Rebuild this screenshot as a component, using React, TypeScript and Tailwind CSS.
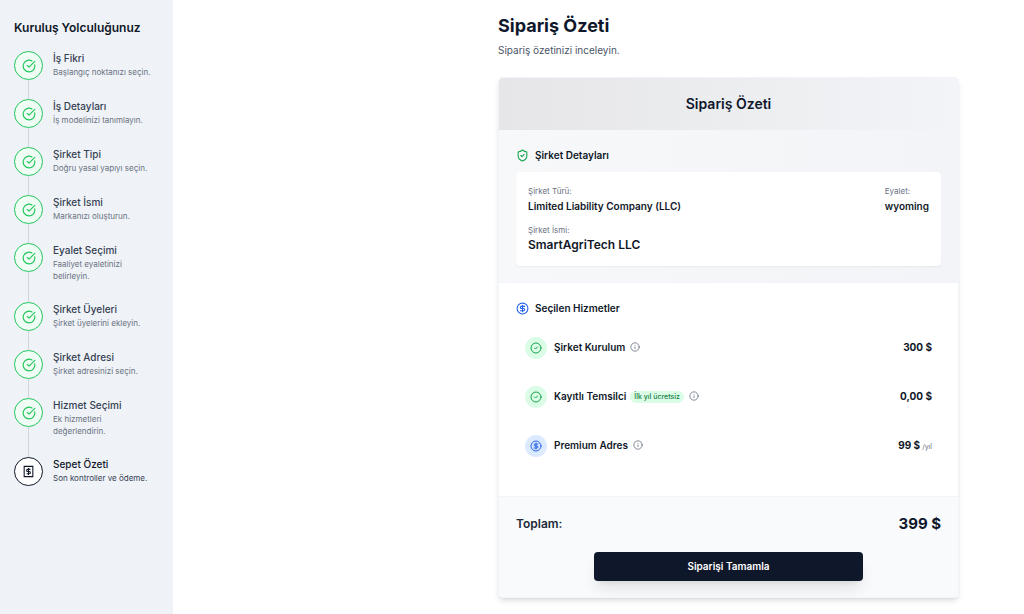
import type { ReactNode } from 'react';
import { CircleCheck, CircleCheckBig, CircleDollarSign, Info, ShieldCheck } from 'lucide-react';

interface Step {
  title: string;
  description: string;
}

interface Service {
  name: string;
  price: string;
  period?: string;
  badge?: string;
  paid?: boolean;
}

const steps: Step[] = [
  { title: 'İş Fikri', description: 'Başlangıç noktanızı seçin.' },
  { title: 'İş Detayları', description: 'İş modelinizi tanımlayın.' },
  { title: 'Şirket Tipi', description: 'Doğru yasal yapıyı seçin.' },
  { title: 'Şirket İsmi', description: 'Markanızı oluşturun.' },
  { title: 'Eyalet Seçimi', description: 'Faaliyet eyaletinizi belirleyin.' },
  { title: 'Şirket Üyeleri', description: 'Şirket üyelerini ekleyin.' },
  { title: 'Şirket Adresi', description: 'Şirket adresinizi seçin.' },
  { title: 'Hizmet Seçimi', description: 'Ek hizmetleri değerlendirin.' },
  { title: 'Sepet Özeti', description: 'Son kontroller ve ödeme.' },
];

const services: Service[] = [
  { name: 'Şirket Kurulum', price: '300 $' },
  { name: 'Kayıtlı Temsilci', price: '0,00 $', badge: 'İlk yıl ücretsiz' },
  { name: 'Premium Adres', price: '99 $', period: '/yıl', paid: true },
];

function ReceiptIcon() {
  return (
    <svg width="13" height="13" viewBox="0 0 24 24" fill="none" stroke="currentColor" strokeWidth="2">
      <path d="M4 2.5h16v19H4z" />
      <path d="M15.5 8h-5a2 2 0 0 0 0 4h3a2 2 0 0 1 0 4h-5" />
      <path d="M12 5.5v13" />
    </svg>
  );
}

function StepItem({ step, current }: { step: Step; current: boolean }) {
  return (
    <li className="flex min-h-12 gap-[10px]">
      <div className="flex flex-col items-center">
        {current ? (
          <div className="flex size-[29px] shrink-0 items-center justify-center rounded-full border border-gray-900 bg-white text-gray-900">
            <ReceiptIcon />
          </div>
        ) : (
          <>
            <div className="flex size-[29px] shrink-0 items-center justify-center rounded-full border border-[#22c55e] bg-green-50 text-[#22c55e]">
              <CircleCheckBig size={14} />
            </div>
            <div className="w-px flex-1 bg-gray-300" />
          </>
        )}
      </div>
      <div className="flex-1 pb-5">
        <h3 className={`text-[10px] leading-[14px] font-medium ${current ? 'text-gray-900' : 'text-gray-700'}`}>
          {step.title}
        </h3>
        <p className={`mt-px max-w-[102px] text-[8px] leading-3 ${current ? 'text-gray-700' : 'text-gray-500'}`}>
          {step.description}
        </p>
      </div>
    </li>
  );
}

function Field({ label, children }: { label: string; children: ReactNode }) {
  return (
    <div>
      <dt className="text-[8px] leading-[14px] text-gray-500">{label}</dt>
      <dd className="text-[10px] leading-4 font-semibold text-gray-900">{children}</dd>
    </div>
  );
}

function ServiceRow({ service }: { service: Service }) {
  return (
    <li className="flex h-[39px] items-center justify-between px-[9px]">
      <div className="flex items-center">
        {service.paid ? (
          <span className="flex size-[22px] items-center justify-center rounded-full bg-blue-100 text-[#2563eb]">
            <CircleDollarSign size={12} />
          </span>
        ) : (
          <span className="flex size-[22px] items-center justify-center rounded-full bg-green-100 text-[#16a34a]">
            <CircleCheck size={12} />
          </span>
        )}
        <span className="ml-[7px] text-[10px] font-semibold text-gray-900">{service.name}</span>
        {service.badge && (
          <span className="ml-1 rounded-full bg-green-100 px-1 text-[7px] leading-3 font-medium text-[#15803d]">
            {service.badge}
          </span>
        )}
        <button type="button" aria-label="Bilgi" className="mb-[2px] ml-[5px] text-gray-500">
          <Info size={10} />
        </button>
      </div>
      <div className="text-[10px] font-bold text-gray-900">
        {service.price}
        {service.period && <span className="ml-[2px] text-[7px] font-normal text-gray-500">{service.period}</span>}
      </div>
    </li>
  );
}

export default function App() {
  return (
    <div className="flex min-h-screen bg-white font-[Inter,sans-serif] text-gray-900">
      <aside className="w-[173px] shrink-0 bg-[#eff3f7] px-[14px] pt-5">
        <h2 className="mb-[15px] text-[12px] leading-4 font-semibold">Kuruluş Yolculuğunuz</h2>
        <ol>
          {steps.map((step, i) => (
            <StepItem key={step.title} step={step} current={i === steps.length - 1} />
          ))}
        </ol>
      </aside>

      <main className="flex flex-1 justify-end pt-[14px] pr-[65px] pb-4">
        <div className="w-full max-w-[461px]">
          <h1 className="text-[18px] leading-6 font-bold text-slate-900">Sipariş Özeti</h1>
          <p className="mt-1 text-[10px] leading-4 text-gray-600">Sipariş özetinizi inceleyin.</p>

          <div className="mt-[19px] overflow-hidden rounded-[5px] border border-slate-100 shadow-md">
            <div className="bg-linear-to-r from-[#e6e6e8] to-[#f2f4f7] py-[14px]">
              <h2 className="text-center text-[14px] leading-6 font-semibold text-slate-900">Sipariş Özeti</h2>
            </div>

            <section className="border-b border-slate-100 bg-linear-to-r from-[#f7f8fa] to-[#f2f4f7] px-[17px] pt-[17px] pb-4">
              <h3 className="flex items-center gap-[6px] text-[10px] leading-4 font-semibold">
                <ShieldCheck size={13} className="text-[#16a34a]" />
                Şirket Detayları
              </h3>
              <dl className="mt-[9px] flex justify-between rounded bg-white px-3 pt-3 pb-[13px] shadow-xs">
                <div className="flex flex-col gap-[9px]">
                  <Field label="Şirket Türü:">Limited Liability Company (LLC)</Field>
                  <Field label="Şirket İsmi:">
                    <span className="text-[12px]">SmartAgriTech LLC</span>
                  </Field>
                </div>
                <Field label="Eyalet:">wyoming</Field>
              </dl>
            </section>

            <section className="border-b border-slate-100 px-[17px] pt-[17px] pb-[31px]">
              <h3 className="flex items-center gap-[6px] text-[10px] leading-4 font-semibold">
                <CircleDollarSign size={13} className="text-[#2563eb]" />
                Seçilen Hizmetler
              </h3>
              <ul className="mt-3 flex flex-col gap-[10px]">
                {services.map((service) => (
                  <ServiceRow key={service.name} service={service} />
                ))}
              </ul>
            </section>

            <footer className="bg-slate-50 px-[17px] pt-[15px] pb-4">
              <div className="flex items-center justify-between">
                <span className="text-[12px] font-semibold text-gray-800">Toplam:</span>
                <span className="text-[15px] leading-6 font-bold text-slate-900">399 $</span>
              </div>
              <button
                type="button"
                className="mx-auto mt-4 block h-[29px] w-full max-w-[269px] rounded bg-[#0f172a] text-[10px] font-semibold text-white shadow-lg hover:bg-slate-800"
              >
                Siparişi Tamamla
              </button>
            </footer>
          </div>
        </div>
      </main>
    </div>
  );
}
